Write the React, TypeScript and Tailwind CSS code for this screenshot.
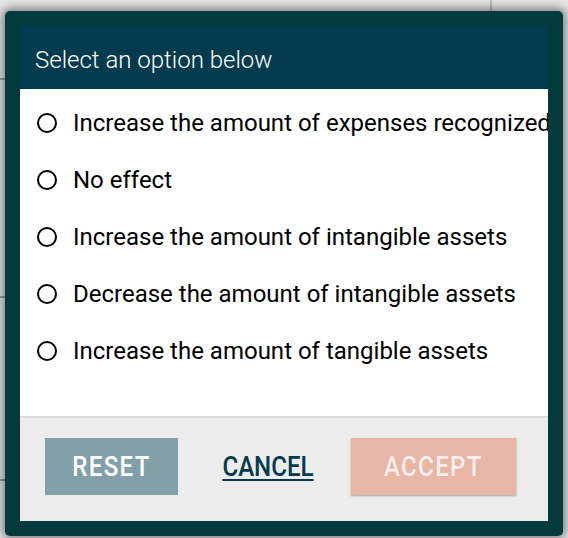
const options = [
  'Increase the amount of expenses recognized',
  'No effect',
  'Increase the amount of intangible assets',
  'Decrease the amount of intangible assets',
  'Increase the amount of tangible assets',
];

export default function App() {
  return (
    <div className="relative w-[568px] h-[538px] overflow-hidden bg-[#e6e6e6] font-['Roboto',sans-serif]">
      {/* page behind the dialog */}
      <div className="absolute left-[490px] top-0 w-[2px] h-[20px] bg-[#b9b9b9]" />
      <div className="absolute left-0 top-[78px] w-[8px] h-[2px] bg-[#9a9a9a]" />
      <div className="absolute left-0 top-[296px] w-[8px] h-[2px] bg-[#9a9a9a]" />
      <div className="absolute left-0 top-[479px] w-[8px] h-[2px] bg-[#9a9a9a]" />

      <div className="absolute left-[5px] top-[11px] w-[558px] h-[525px] rounded-[5px] bg-[#023a3e] p-[15px] shadow-[0_0_10px_3px_rgba(0,0,0,0.45)]">
        <div className="flex h-full flex-col">
          <div className="flex h-[63px] items-center bg-[#013b4d] pl-[15px] pt-[4px]">
            <span className="text-[24px] font-light leading-none text-white">Select an option below</span>
          </div>

          {/* the first option is wider than the panel and gets clipped, as in the original */}
          <div className="flex-1 overflow-hidden bg-white pt-[5px]">
            {options.map((o) => (
              <label key={o} className="flex h-[57px] items-center whitespace-nowrap pl-[17px]">
                <span className="h-[20px] w-[20px] shrink-0 rounded-full border-2 border-black" />
                <span className="ml-[16px] text-[24px] leading-none text-black">{o}</span>
              </label>
            ))}
          </div>

          <div className="flex h-[105px] items-start border-t-2 border-[#dcdcdc] bg-[#ececec] pl-[25px] pt-[20px]">
            <button className="flex h-[57px] w-[133px] items-center justify-center bg-[#82a0a7]">
              <span className="inline-block scale-x-[0.86] text-[28px] font-medium leading-none tracking-[1.5px] text-white">RESET</span>
            </button>
            <div className="ml-[44px] flex h-[57px] w-[91px] items-center justify-center">
              <span className="inline-block scale-x-[0.86] text-[28px] font-medium leading-none text-[#013b4d] underline decoration-2 underline-offset-[3px]">
                CANCEL
              </span>
            </div>
            <button className="ml-[38px] flex h-[57px] w-[165px] items-center justify-center bg-[#e8b6a5] shadow-[0_1px_2px_rgba(0,0,0,0.3)]">
              <span className="inline-block scale-x-[0.86] text-[28px] font-medium leading-none tracking-[1.5px] text-[#f7eeea]">ACCEPT</span>
            </button>
          </div>
        </div>
      </div>
    </div>
  );
}
